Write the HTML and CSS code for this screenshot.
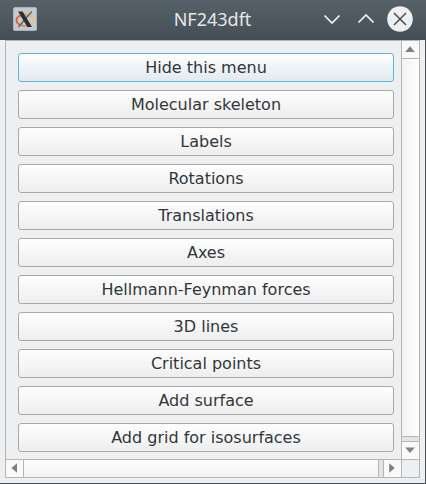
FILE: index.html
```html
<!DOCTYPE html>
<html lang="en">
<head>
<meta charset="utf-8">
<title>NF243dft</title>
<link rel="stylesheet" href="styles.css">
</head>
<body>
<div class="window">
  <header class="titlebar">
    <svg class="app-icon" width="24" height="24" viewBox="0 0 24 24">
      <defs>
        <linearGradient id="ring" x1="0" x2="1"><stop offset="0" stop-color="#e9501f"/><stop offset=".45" stop-color="#ee8a50"/><stop offset="1" stop-color="#ebc88c"/></linearGradient>
      </defs>
      <rect x=".5" y=".5" width="23" height="23" rx="1.5" fill="#c3cacd" stroke="#acb4b7"/>
      <ellipse cx="12.2" cy="13.3" rx="8.8" ry="5.6" fill="none" stroke="url(#ring)" stroke-width="1.7"/>
      <path d="M18.8 4.5 5.5 20" stroke="#5b5f60" stroke-width="1.2"/>
      <path d="M5 4.500h4.600L19 20h-4.600z" fill="#2b2f30"/>
    </svg>
    <h1 class="title">NF243dft</h1>
    <div class="controls">
      <svg width="26" height="26" viewBox="0 0 26 26"><path d="M5.500 9.500 13 17l7.500-7.500"/></svg>
      <svg width="26" height="26" viewBox="0 0 26 26"><path d="M5.500 16.500 13 9l7.500 7.500"/></svg>
      <svg class="close" width="26" height="26" viewBox="0 0 26 26"><circle cx="13" cy="13" r="12.800"/><path d="M7 7l12 12M19 7 7 19"/></svg>
    </div>
  </header>
  <main class="body">
    <div class="frame">
      <nav class="menu">
        <button class="btn active">Hide this menu</button>
        <button class="btn">Molecular skeleton</button>
        <button class="btn">Labels</button>
        <button class="btn">Rotations</button>
        <button class="btn">Translations</button>
        <button class="btn">Axes</button>
        <button class="btn">Hellmann-Feynman forces</button>
        <button class="btn">3D lines</button>
        <button class="btn">Critical points</button>
        <button class="btn">Add surface</button>
        <button class="btn">Add grid for isosurfaces</button>
      </nav>
      <div class="vbar">
        <div class="arrow"><svg width="17" height="17" viewBox="0 0 17 17"><path d="M3.200 11 8 5.200 12.800 11z"/></svg></div>
        <div class="handle"></div>
        <div class="groove"></div>
        <div class="arrow"><svg width="17" height="17" viewBox="0 0 17 17"><path d="M3.200 5.500 8 11 12.800 5.500z"/></svg></div>
      </div>
      <div class="hbar">
        <div class="arrow"><svg width="17" height="17" viewBox="0 0 17 17"><path d="M11 3.200 5.400 8 11 12.800z"/></svg></div>
        <div class="handle"></div>
        <div class="groove"></div>
        <div class="arrow"><svg width="17" height="17" viewBox="0 0 17 17"><path d="M5.200 3.200 10.800 8 5.200 12.800z"/></svg></div>
      </div>
      <div class="corner"></div>
    </div>
  </main>
</div>
</body>
</html>
```
FILE: styles.css
```css
* { box-sizing: border-box; }
body { margin: 0; overflow: hidden; }
svg { display: block; }

.window {
  width: 426px;
  height: 484px;
  display: flex;
  flex-direction: column;
  background: #eeeff1;
}

.titlebar {
  height: 40px;
  flex: none;
  display: grid;
  grid-template-columns: 106px 1fr 107px;
  align-items: center;
  padding: 0 13px 2px 13px;
  background: linear-gradient(#566169, #454e54);
}

.title {
  margin: 0;
  font: 400 18px/24px "Noto Sans", sans-serif;
  text-align: center;
  color: #e6e8e9;
}

.controls {
  display: flex;
  justify-content: flex-end;
  gap: 8px;
}
.controls path { fill: none; stroke: #eff0f1; stroke-width: 1.7; }
.controls circle { fill: #eeeff1; }
.controls .close path { stroke: #475057; stroke-width: 1.5; }

.body {
  flex: 1;
  padding: 0 5px;
  border-right: 1px solid #475057;
  border-bottom: 1px solid #475057;
}

.frame {
  width: 415px;
  height: 438px;
  border: 1px solid #b4b5b6;
  display: grid;
  grid-template-columns: 395px 18px;
  grid-template-rows: 418px 18px;
}

.menu {
  display: flex;
  flex-direction: column;
  gap: 8px;
  padding: 12px 7px 0 12px;
}

.btn {
  height: 29px;
  flex: none;
  padding: 0;
  border: 1px solid #a8a9aa;
  border-radius: 3px;
  background: linear-gradient(#fefefe, #eeeeee);
  color: #31363b;
  font: 16px/27px "DejaVu Sans", sans-serif;
}
.btn.active {
  border-color: #5eb5e0;
  background: linear-gradient(#fefefe, #e1eaef);
}

.vbar, .hbar { display: flex; }
.vbar { flex-direction: column; border-left: 1px solid #b4b5b6; }
.hbar { border-top: 1px solid #b4b5b6; }
.arrow { width: 17px; height: 17px; flex: none; background: #f9f9f9; }
.arrow path { fill: #7d8082; }
.handle { flex: 1; }
.groove { background: #e4e4e4; }
.vbar .handle {
  border: solid #b4b5b6;
  border-width: 1px 0;
  background: linear-gradient(90deg, #f2f2f2, #fefefe);
}
.vbar .groove { height: 5px; border-bottom: 1px solid #b4b5b6; }
.hbar .handle {
  border: solid #b4b5b6;
  border-width: 0 1px;
  background: linear-gradient(#fefefe, #f2f2f2);
}
.hbar .groove { width: 5px; border-right: 1px solid #b4b5b6; }
.corner {
  border: solid #b4b5b6;
  border-width: 1px 0 0 1px;
}
```
